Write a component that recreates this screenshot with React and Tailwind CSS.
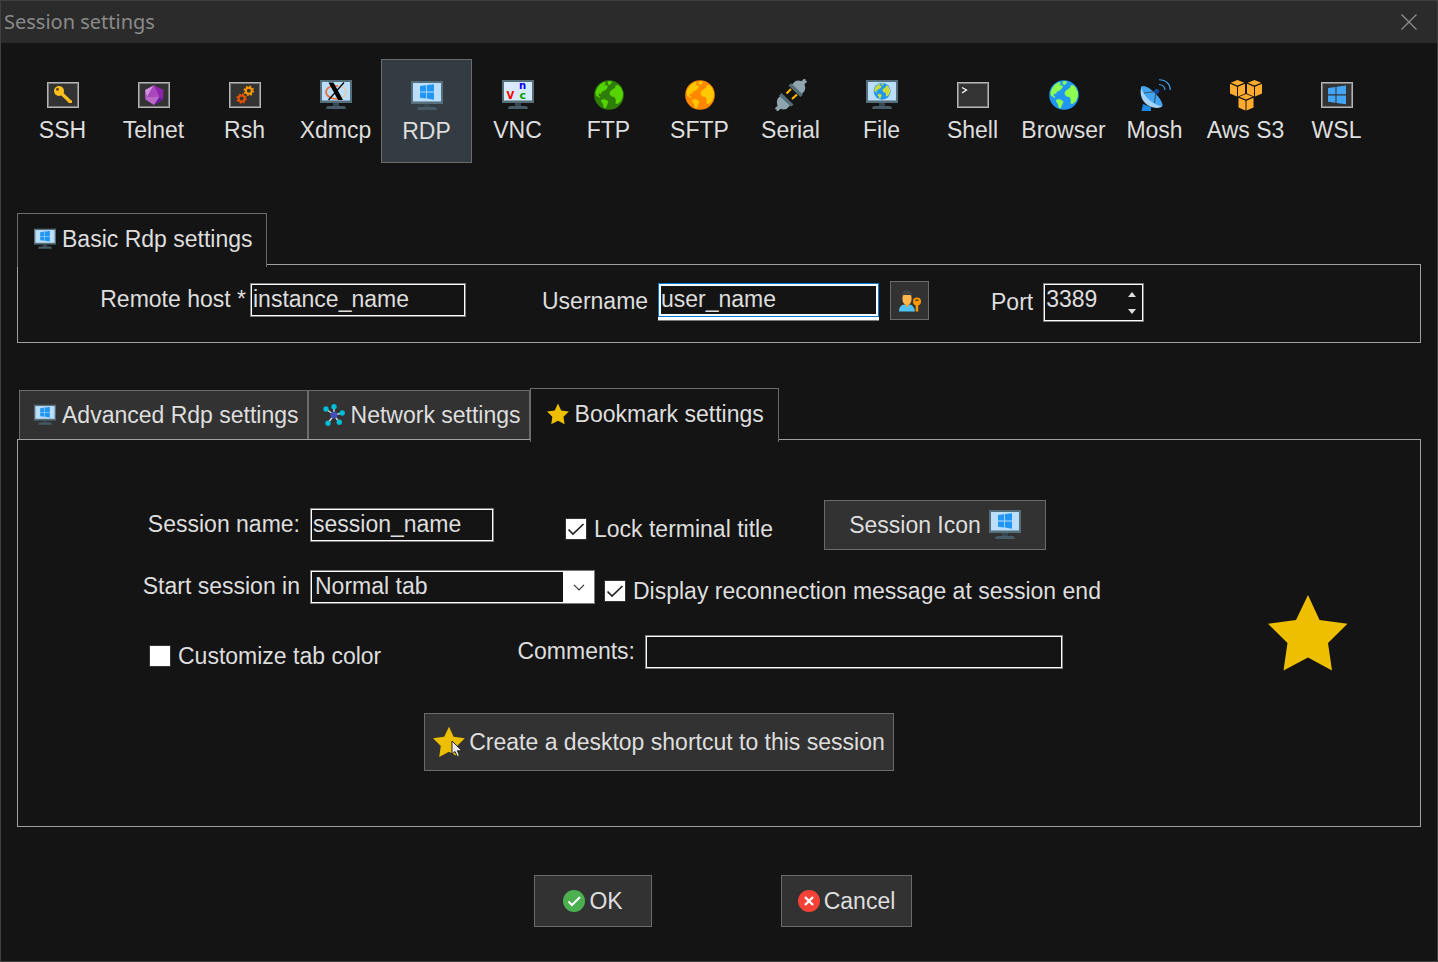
import { useState } from 'react'
import clsx from 'clsx'

const STAR = '40,0 51.5,25 79.5,28.7 60,48 64,75.5 40,62.5 15.5,75.5 19.5,48 0,28.7 28,25'

function Star({ className }) {
  return (
    <svg viewBox="0 0 80 76" className={className} aria-hidden="true">
      <polygon points={STAR} fill="#eebf00" />
    </svg>
  )
}

function Icon({ children, className = 'size-8' }) {
  return (
    <svg viewBox="0 0 32 32" className={clsx('shrink-0', className)} aria-hidden="true">
      {children}
    </svg>
  )
}

function TerminalFrame({ children, className }) {
  return (
    <Icon className={className}>
      <rect x="0" y="3" width="32" height="26" fill="#b4b4b4" />
      <rect x="1" y="4" width="30" height="24" fill="#7b7b7b" />
      <rect x="2" y="5" width="28" height="22" fill="#333" />
      {children}
    </Icon>
  )
}

function Monitor({ children, className, screen = '#bbdefb' }) {
  return (
    <Icon className={className}>
      <rect x="0" y="1" width="32" height="23" fill="#546e7a" />
      <rect x="2" y="3" width="28" height="18.5" fill={screen} />
      <rect x="13" y="24" width="6" height="3.5" fill="#37474f" />
      <path d="M8 27h16q2 .6 2 3H6q0-2.400 2-3z" fill="#455a64" />
      {children}
    </Icon>
  )
}

function WindowsMonitor({ className }) {
  return (
    <Monitor className={className}>
      <path d="M9 6l6-.8v6.300H9zM15.800 5.100L23 4.200v7.300h-7.200zM9 12.500h6v6l-6-.8zM15.800 12.500H23v7.200l-7.200-1.100z" fill="#2196f3" />
    </Monitor>
  )
}

function GlobeShape({ sea, land }) {
  return (
    <>
      <circle cx="16" cy="16" r="14.800" fill={sea} />
      <path d="M4 9.500l3-4 4-2.500 2 1-2 2.500 2.500-.5 1.500 1.500-1.500 2.500-2.500 2-2 .5-1 2.500-2-.5-.5 2 2 1.500-1 .7-3.500-2.200-.6-3z" fill={land} />
      <path d="M14.500 2.500l3.500-.5 1 1.500-2.500 2.500-1.500-.5z" fill={land} />
      <path d="M8.500 20.500l3.500-.3 3.500 2.300-1 2.500-1.500 3.500-1 1-1.500-1.500-.5-3-2-2.500z" fill={land} />
      <path d="M20 10l2-1 .5-2.500 2.500-.5 2.700 2.500 2.300 5-.3 4.500-2 4.500-3.200 2.500-2-.5.3-3.500-1.300-3-3-.5-2-2.500.5-2.500z" fill={land} />
    </>
  )
}

function Globe({ sea, land }) {
  return (
    <Icon>
      <GlobeShape sea={sea} land={land} />
    </Icon>
  )
}

function Gear({ cx, cy, color }) {
  return (
    <>
      <circle cx={cx} cy={cy} r="4.400" fill="none" stroke={color} strokeWidth="1.800" strokeDasharray="1.730 1.730" />
      <circle cx={cx} cy={cy} r="3" fill="none" stroke={color} strokeWidth="2" />
    </>
  )
}

function Plug() {
  return (
    <>
      <path d="M17 5.500l3.500-3.500q3.500-1 6 .3l1.700-1.700.3-.6h2l-.2 1.500 1.700.5-.5 1.500-2 1.500q1.500 4 0 7l-3.500 4z" fill="#90a4ae" />
      <path d="M13.500 6.500l2.500-2.300 12 11.300-2.500 2.500z" fill="#546e7a" />
    </>
  )
}

function Cube({ x, y }) {
  return (
    <g transform={`translate(${x} ${y})`} fill="#ffab2e">
      <path d="M7.500 0l6.700 2.700-6.700 2.800L.8 2.700z" />
      <path d="M0 3.800l7 2.900v9.800L0 13.500z" />
      <path d="M15 3.800l-7 2.900v9.800l7-3z" />
    </g>
  )
}

const sessions = [
  {
    name: 'SSH',
    icon: (
      <TerminalFrame>
        <path d="M12.500 12.500l11 10.500" stroke="#fdc01c" strokeWidth="3.200" />
        <path d="M20 21.500l2 2.500h3v-2.500" fill="#fdb913" />
        <circle cx="12" cy="12" r="5" fill="#fdc01c" />
        <circle cx="10.500" cy="10.300" r="1.500" fill="#6d4c14" />
      </TerminalFrame>
    ),
  },
  {
    name: 'Telnet',
    icon: (
      <TerminalFrame>
        <polygon points="16,6.300 25.500,11 25,20.500 16,26 7.500,20.500 7,11" fill="#8e24aa" />
        <polygon points="16,6.300 7,11 9,18" fill="#ce93d8" />
        <polygon points="7,11 9,18 7.500,20.500" fill="#ba68c8" />
        <polygon points="16,6.300 9,18 21.500,18" fill="#ab47bc" />
        <polygon points="9,18 21.500,18 16,26 7.500,20.500" fill="#ba68c8" />
        <polygon points="21.500,18 16,26 25,20.500" fill="#6a1b9a" />
      </TerminalFrame>
    ),
  },
  {
    name: 'Rsh',
    icon: (
      <TerminalFrame>
        <Gear cx="19.800" cy="11.800" color="#ff9800" />
        <Gear cx="12.600" cy="19.500" color="#e65100" />
      </TerminalFrame>
    ),
  },
  {
    name: 'Xdmcp',
    icon: (
      <Monitor>
        <path d="M18 7C11 6 6 9 6 13s5 7 11 7" fill="none" stroke="#f4672c" strokeWidth="1.600" />
        <path d="M18 7c5 .5 8 3 8 6s-3 6.500-9 7" fill="none" stroke="#f2c48a" strokeWidth="1.200" />
        <path d="M8.500 3.500h5l9.500 17.500h-5z" fill="#000" />
        <path d="M24 3.500L8.500 21" stroke="#000" strokeWidth="1.200" />
      </Monitor>
    ),
  },
  { name: 'RDP', icon: <WindowsMonitor /> },
  {
    name: 'VNC',
    icon: (
      <Monitor screen="#d6eafb">
        <g fontFamily="DejaVu Sans, sans-serif" fontWeight="700">
          <text x="4.500" y="20" fontSize="10" fill="#f00">V</text>
          <text x="17" y="10" fontSize="10" fill="#00f">n</text>
          <text x="17.500" y="19.500" fontSize="11" fill="#00a000">c</text>
        </g>
      </Monitor>
    ),
  },
  { name: 'FTP', icon: <Globe sea="#2e7d0b" land="#55d400" /> },
  { name: 'SFTP', icon: <Globe sea="#ff8800" land="#ffc800" /> },
  {
    name: 'Serial',
    icon: (
      <Icon>
        <path d="M11.500 14.500l4.500-4.500M17 20l5-4.500" stroke="#ffb300" strokeWidth="2.200" />
        <Plug />
        <g transform="rotate(180 16 16)">
          <Plug />
        </g>
      </Icon>
    ),
  },
  {
    name: 'File',
    icon: (
      <Monitor>
        <g transform="translate(7 3.200) scale(.57)">
          <GlobeShape sea="#2196f3" land="#cddc39" />
        </g>
      </Monitor>
    ),
  },
  {
    name: 'Shell',
    icon: (
      <TerminalFrame>
        <path d="M5 8.500l4.500 2.500L5 14" fill="none" stroke="#fff" strokeWidth="1.300" />
      </TerminalFrame>
    ),
  },
  { name: 'Browser', icon: <Globe sea="#2196f3" land="#8eff4e" /> },
  {
    name: 'Mosh',
    icon: (
      <Icon>
        <path d="M4 25L2.500 32H12v-4z" fill="#1e88e5" />
        <path d="M2.500 7.500C-1 18 6 28.500 18 29q3.500 0 5.500-2z" fill="#a6d4fa" />
        <path d="M2.500 7.500C7 4 24 19 23.500 27 16 28 1.500 15 2.500 7.500z" fill="#42a5f5" />
        <path d="M5 14l12-1.500L15.500 24" fill="none" stroke="#37586e" strokeWidth="1.200" />
        <circle cx="17.800" cy="12.300" r="2.500" fill="#0d47a1" />
        <path d="M20 .7C27 .7 31.300 5 31.300 11M20 5.500c3.500 0 6 2.500 6 5.500" fill="none" stroke="#42a5f5" strokeWidth="1.100" />
      </Icon>
    ),
  },
  {
    name: 'Aws S3',
    icon: (
      <Icon>
        <Cube x="0" y="1" />
        <Cube x="17" y="1" />
        <Cube x="8.500" y="15" />
      </Icon>
    ),
  },
  {
    name: 'WSL',
    icon: (
      <TerminalFrame>
        <path d="M7 9l7.500-1.100v7.300H7zM15.500 7.700l9.500-1.300v8.800h-9.500zM7 16.500h7.500v7.300L7 22.800zM15.500 16.500H25v8.800l-9.500-1.300z" fill="#42a5f5" />
      </TerminalFrame>
    ),
  },
]

function NetworkIcon() {
  return (
    <svg viewBox="0 0 22 22" className="size-[22px] shrink-0" aria-hidden="true">
      <path d="M11 11L3 5M11 11V3M11 11l8-2M11 11l5 7M11 11l-6 8" stroke="#cfd8dc" strokeWidth="1.500" />
      <circle cx="11" cy="11" r="3.600" fill="#3f51b5" />
      <g fill="#00bcd4">
        <circle cx="3" cy="5" r="2.700" />
        <circle cx="11" cy="2.700" r="2.700" />
        <circle cx="19.200" cy="9" r="2.700" />
        <circle cx="16.300" cy="18.300" r="2.700" />
        <circle cx="5" cy="19.300" r="2.700" />
      </g>
    </svg>
  )
}

function UserKeyIcon() {
  return (
    <svg viewBox="0 0 24 24" className="size-6" aria-hidden="true">
      <path d="M1 22.500q0-6 5-7h6q4 1 5 7z" fill="#4fc3f7" />
      <path d="M6.500 14.500h5l-2.500 4z" fill="#ff9800" />
      <path d="M4.500 6h9v5q-.5 4.500-4.500 5-4-.5-4.500-5z" fill="#ffb74d" />
      <path d="M4 8Q3.500 1.500 9 1q5.500.5 5 7l-2-2.500H6z" fill="#424242" />
      <circle cx="19" cy="12.500" r="4" fill="#ff9800" />
      <rect x="17.700" y="15" width="2.500" height="7.500" fill="#ff9800" />
      <rect x="17.500" y="10.500" width="3" height="1.500" fill="#5a3a00" />
    </svg>
  )
}

function Tab({ active, children }) {
  return (
    <button
      type="button"
      role="tab"
      aria-selected={Boolean(active)}
      className={clsx(
        'flex items-center gap-1.5 border-x border-t border-[#6b6b6b] whitespace-nowrap',
        active ? 'relative z-10 h-[54px] bg-[#141414] pr-3.5 pb-1 pl-4' : 'mt-0.5 h-[49px] bg-[#323232] pr-2 pl-3.5'
      )}
    >
      {children}
    </button>
  )
}

const fieldBox = 'h-[34px] border border-[#7a7a7a] bg-[#141414] shadow-[inset_0_0_0_1px_#fff] outline-none'
const buttonBox = 'flex items-center justify-center border border-[#6b6b6b] bg-[#323232] whitespace-nowrap'

function Checkbox({ label, checked = false, className }) {
  return (
    <label className={clsx('flex items-center gap-[7px] pt-2 leading-6 whitespace-nowrap', className)}>
      <span className="relative size-[22px] shrink-0">
        <input type="checkbox" defaultChecked={checked} className="peer block size-[22px] appearance-none border border-[#333] bg-white" />
        <svg viewBox="0 0 22 22" className="pointer-events-none absolute inset-0 hidden peer-checked:block" aria-hidden="true">
          <path d="M3.500 11.500l4.500 4.500L18.500 6" fill="none" stroke="#222" strokeWidth="1.700" />
        </svg>
      </span>
      {label}
    </label>
  )
}

export default function App() {
  const [selected, setSelected] = useState('RDP')
  const [port, setPort] = useState(3389)

  return (
    <div className="min-h-screen border border-[#404040] bg-[#141414] font-['Liberation_Sans',Arial,sans-serif] text-[23px] leading-7 text-[#dedede]">
      <header className="flex h-[42px] items-center justify-between bg-[#2b2b2b] pr-5 pl-[3px]">
        <h1 className="font-['Noto_Sans',sans-serif] text-xl text-[#8a8a8a]">Session settings</h1>
        <button type="button" aria-label="Close">
          <svg viewBox="0 0 16 16" className="size-4" aria-hidden="true">
            <path d="M.5.500l15 15M15.500.500l-15 15" stroke="#909090" strokeWidth="1.200" />
          </svg>
        </button>
      </header>

      <main className="px-4 pt-4 pb-[34px]">
        <nav className="flex">
          {sessions.map(({ name, icon }) => (
            <button
              key={name}
              type="button"
              onClick={() => setSelected(name)}
              className={clsx(
                'flex h-[104px] w-[91px] flex-col items-center gap-[5px] border whitespace-nowrap',
                selected === name ? 'border-[#6b6b6b] bg-[#333b43] pt-5' : 'border-transparent pt-[19px]'
              )}
            >
              {icon}
              <span>{name}</span>
            </button>
          ))}
        </nav>

        <section className="mt-[50px]">
          <div role="tablist" className="-mb-[3px] flex">
            <Tab active>
              <WindowsMonitor className="size-[22px]" />
              Basic Rdp settings
            </Tab>
          </div>
          <div className="flex h-[79px] items-start border border-[#a0a0a0] pt-[18px]">
            <div className="flex items-center gap-1">
              <label htmlFor="host" className="w-[228px] pb-0.5 text-right">Remote host *</label>
              <input id="host" defaultValue="instance_name" className={clsx(fieldBox, 'w-[216px] pb-0.5 pl-0.5')} />
            </div>
            <div className="ml-[76px] flex items-center gap-2.5">
              <label htmlFor="user" className="w-[106px] pb-0.5 text-right">Username</label>
              <div className="border-b-3 border-white shadow-[0_1px_0_#7a7a7a]">
                <input
                  id="user"
                  defaultValue="user_name"
                  className="block h-[34px] w-[221px] border border-[#0078d7] bg-[#141414] pb-0.5 pl-0.5 shadow-[inset_0_0_0_2px_#fff] outline-none"
                />
              </div>
            </div>
            <button type="button" aria-label="Manage credentials" className={clsx(buttonBox, '-mt-0.5 ml-[11px] h-[39px] w-[39px]')}>
              <UserKeyIcon />
            </button>
            <div className="ml-[62px] flex items-center gap-2.5">
              <label htmlFor="port" className="pb-0.5">Port</label>
              <div className="flex h-[39px] w-[101px] border border-[#7a7a7a] shadow-[inset_0_0_0_1px_#fff]">
                <input
                  id="port"
                  type="number"
                  value={port}
                  onChange={(e) => setPort(Number(e.target.value))}
                  className="w-20 pb-2 pl-0.5 outline-none [appearance:textfield] [&::-webkit-inner-spin-button]:appearance-none"
                />
                <div className="flex flex-col items-center justify-center gap-3 pl-1">
                  <button type="button" aria-label="Increase port" onClick={() => setPort(port + 1)}>
                    <svg viewBox="0 0 8 5" className="h-[5px] w-2" aria-hidden="true">
                      <path d="M4 0l4 5H0z" fill="#dedede" />
                    </svg>
                  </button>
                  <button type="button" aria-label="Decrease port" onClick={() => setPort(port - 1)}>
                    <svg viewBox="0 0 8 5" className="h-[5px] w-2" aria-hidden="true">
                      <path d="M4 5L0 0h8z" fill="#dedede" />
                    </svg>
                  </button>
                </div>
              </div>
            </div>
          </div>
        </section>

        <section className="mt-[45px]">
          <div role="tablist" className="-mb-[3px] ml-0.5 flex items-start">
            <Tab>
              <WindowsMonitor className="size-[22px]" />
              Advanced Rdp settings
            </Tab>
            <Tab>
              <NetworkIcon />
              Network settings
            </Tab>
            <Tab active>
              <Star className="size-[22px]" />
              Bookmark settings
            </Tab>
          </div>

          <div className="flex items-center justify-between border border-[#a0a0a0] pr-[72px]">
            <div className="pt-[60px] pb-[55px]">
              <div className="flex items-center">
                <label htmlFor="session" className="w-[282px] pb-0.5 text-right">Session name:</label>
                <input id="session" defaultValue="session_name" className={clsx(fieldBox, 'ml-2.5 w-[184px] pb-0.5 pl-0.5')} />
                <Checkbox label="Lock terminal title" checked className="ml-[71px] w-[259px]" />
                <button type="button" className={clsx(buttonBox, 'h-[50px] w-[222px] gap-2')}>
                  Session Icon
                  <WindowsMonitor />
                </button>
              </div>

              <div className="mt-5 flex items-center">
                <label htmlFor="start" className="w-[282px] pb-0.5 text-right">Start session in</label>
                <div className="relative ml-2.5">
                  <select id="start" className={clsx(fieldBox, 'block w-[285px] appearance-none pb-0.5 pl-1')}>
                    <option>Normal tab</option>
                    <option>Detached window</option>
                    <option>Fullscreen</option>
                  </select>
                  <span className="pointer-events-none absolute inset-y-px right-px flex w-[31px] items-center justify-center bg-white">
                    <svg viewBox="0 0 12 7" className="h-[7px] w-3" aria-hidden="true">
                      <path d="M1 .8l5 5 5-5" fill="none" stroke="#333" strokeWidth="1.200" />
                    </svg>
                  </span>
                </div>
                <Checkbox label="Display reconnection message at session end" checked className="ml-[9px]" />
              </div>

              <div className="mt-[31px] flex items-center">
                <Checkbox label="Customize tab color" className="ml-[131px] w-60" />
                <label htmlFor="comments" className="w-[246px] pb-0.5 text-right">Comments:</label>
                <input id="comments" className={clsx(fieldBox, 'ml-2.5 w-[418px] pb-0.5 pl-0.5')} />
              </div>

              <button type="button" className={clsx(buttonBox, 'relative mt-11 ml-[406px] h-[58px] w-[470px] gap-1')}>
                <Star className="size-8" />
                Create a desktop shortcut to this session
                <svg viewBox="0 0 12 18" className="absolute top-[26px] left-[26px] h-[18px] w-3" aria-hidden="true">
                  <path d="M1 1v13l3-2.500 2.200 5 2.300-1-2.200-4.700H11z" fill="#e8e8e8" stroke="#222" strokeWidth="1" />
                </svg>
              </button>
            </div>
            <Star className="h-[76px] w-20 shrink-0" />
          </div>
        </section>

        <footer className="mt-12 flex justify-center gap-[129px] pl-2">
          <button type="button" className={clsx(buttonBox, 'h-[52px] w-[118px] gap-1')}>
            <svg viewBox="0 0 22 22" className="size-[22px]" aria-hidden="true">
              <circle cx="11" cy="11" r="11" fill="#4caf50" />
              <path d="M5.500 11.500l3.500 3.500 8-8" fill="none" stroke="#fff" strokeWidth="2" />
            </svg>
            OK
          </button>
          <button type="button" className={clsx(buttonBox, 'h-[52px] w-[131px] gap-1')}>
            <svg viewBox="0 0 22 22" className="size-[22px]" aria-hidden="true">
              <circle cx="11" cy="11" r="11" fill="#f44336" />
              <path d="M7 7l8 8M15 7l-8 8" stroke="#fff" strokeWidth="2.400" />
            </svg>
            Cancel
          </button>
        </footer>
      </main>
    </div>
  )
}
